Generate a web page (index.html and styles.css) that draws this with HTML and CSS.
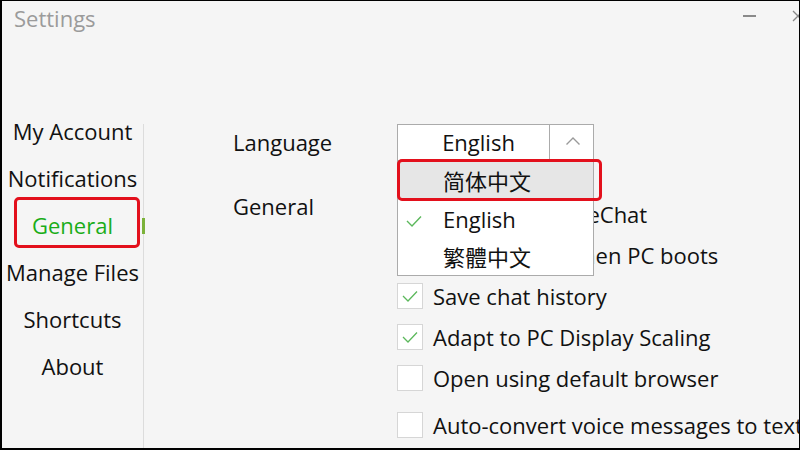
FILE: index.html
```html
<!DOCTYPE html>
<html>
<head>
<meta charset="utf-8">
<link rel="stylesheet" href="styles.css">
</head>
<body>
<div class="window">
  <header class="titlebar">
    <span class="title">Settings</span>
    <div class="controls">
      <span class="min"></span>
      <svg class="close" width="12" height="12" viewBox="0 0 12 12"><path d="M1 1L11 11M11 1L1 11" stroke="#888" stroke-width="1.3" fill="none"/></svg>
    </div>
  </header>
  <div class="main">
    <nav class="sidebar">
      <div class="nav-item">My Account</div>
      <div class="nav-item">Notifications</div>
      <div class="nav-item active">General<span class="hl-box"></span></div>
      <div class="nav-item">Manage Files</div>
      <div class="nav-item">Shortcuts</div>
      <div class="nav-item">About</div>
    </nav>
    <div class="divider"><span class="indicator"></span></div>
    <section class="content">
      <div class="row lang-row">
        <div class="label">Language</div>
        <div class="select-wrap">
          <div class="select">
            <span class="sel-value">English</span>
            <span class="sel-btn"><svg width="16" height="10" viewBox="0 0 16 10"><path d="M1.5 8.5L8 2L14.5 8.5" stroke="#9a9a9a" stroke-width="1.4" fill="none"/></svg></span>
          </div>
          <ul class="menu">
            <li class="opt hover">简体中文<span class="hl-box2"></span></li>
            <li class="opt"><svg class="tick" width="16" height="12" viewBox="0 0 16 12"><path d="M1 6L6 11L15 1.5" stroke="#5cb85c" stroke-width="1.4" fill="none"/></svg>English</li>
            <li class="opt">繁體中文</li>
          </ul>
        </div>
      </div>
      <div class="row gen-row">
        <div class="label gen-label">General</div>
        <div class="checks">
          <label class="check"><span class="box"></span>Auto-update WeChat</label>
          <label class="check"><span class="box"></span>Run WeChat when PC boots</label>
          <label class="check"><span class="box on"><svg width="16" height="12" viewBox="0 0 16 12"><path d="M1 6L6 11L15 1.5" stroke="#5cb85c" stroke-width="1.3" fill="none"/></svg></span>Save chat history</label>
          <label class="check"><span class="box on"><svg width="16" height="12" viewBox="0 0 16 12"><path d="M1 6L6 11L15 1.5" stroke="#5cb85c" stroke-width="1.3" fill="none"/></svg></span>Adapt to PC Display Scaling</label>
          <label class="check"><span class="box"></span>Open using default browser</label>
          <label class="check last"><span class="box"></span>Auto-convert voice messages to text</label>
        </div>
      </div>
    </section>
  </div>
</div>
</body>
</html>
```
FILE: styles.css
```css
* { box-sizing: border-box; margin: 0; padding: 0; }
html, body { width: 800px; height: 450px; overflow: hidden; }
body {
  background: #000;
  font-family: "Open Sans", "Noto Sans CJK SC", sans-serif;
  color: #111;
}
.window {
  width: 800px;
  height: 450px;
  background: #f5f5f5;
  border-style: solid;
  border-color: #000;
  border-width: 1px 1px 2px 2px;
  overflow: hidden;
  display: flex;
  flex-direction: column;
}
.titlebar {
  height: 107px;
  flex: none;
  display: flex;
  justify-content: space-between;
  align-items: flex-start;
  padding: 2px 0 0 12px;
}
.title {
  font-size: 22px;
  color: #9b9b9b;
  line-height: 30px;
}
.controls {
  display: flex;
  align-items: center;
  gap: 36px;
  margin-top: 7px;
  margin-right: -5px;
}
.min {
  width: 13px;
  height: 2px;
  background: #8a8a8a;
}
.close { display: block; }
.main {
  flex: 1;
  display: flex;
  min-height: 0;
}
.sidebar {
  width: 141px;
  flex: none;
  display: flex;
  flex-direction: column;
}
.nav-item {
  position: relative;
  height: 47px;
  line-height: 47px;
  text-align: center;
  font-size: 22px;
  white-space: nowrap;
}
.nav-item.active { color: #1aad19; }
.hl-box {
  position: absolute;
  left: 12px;
  right: 3px;
  top: -5px;
  bottom: 1px;
  border: 3px solid #e3101c;
  border-radius: 5px;
}
.divider {
  position: relative;
  flex: none;
  width: 1px;
  margin-top: 16px;
  background: #dcdcdc;
}
.indicator {
  position: absolute;
  left: -1px;
  top: 94px;
  width: 3px;
  height: 16px;
  background: #7bb23a;
}
.content {
  flex: 1;
  min-width: 0;
  padding: 16px 0 0 89px;
  font-size: 22px;
}
.row { display: flex; }
.label { width: 164px; flex: none; line-height: 37px; }
.select-wrap { position: relative; flex: none; }
.select {
  width: 197px;
  height: 37px;
  background: #fff;
  border: 1px solid #ababab;
  display: flex;
}
.sel-value {
  width: 151px;
  text-align: center;
  line-height: 35px;
  padding-left: 10px;
}
.sel-btn {
  flex: 1;
  border-left: 1px solid #ababab;
  display: flex;
  align-items: center;
  justify-content: center;
  padding-bottom: 4px;
  padding-left: 2px;
}
.menu {
  position: absolute;
  left: 0;
  top: 36px;
  width: 197px;
  height: 116px;
  background: #fff;
  border: 1px solid #ababab;
  list-style: none;
  padding-top: 1px;
  z-index: 5;
}
.opt {
  position: relative;
  height: 38px;
  line-height: 38px;
  padding-left: 45px;
}
.opt.hover { background: #e6e6e6; }
.tick {
  position: absolute;
  left: 8px;
  top: 15px;
}
.hl-box2 {
  position: absolute;
  left: -1px;
  right: -9px;
  top: -3px;
  bottom: -1px;
  border: 3px solid #e3101c;
  border-radius: 5px;
}
.gen-row { margin-top: 26px; }
.gen-label { line-height: 38px; }
.checks {
  display: flex;
  flex-direction: column;
  margin-top: 6px;
}
.check {
  display: flex;
  align-items: center;
  height: 41px;
  gap: 10px;
  white-space: nowrap;
}
.check.last { margin-top: 6px; }
.box {
  width: 26px;
  height: 26px;
  background: #fff;
  border: 1px solid #d6d6d6;
  display: flex;
  align-items: center;
  justify-content: center;
  flex: none;
}
```
